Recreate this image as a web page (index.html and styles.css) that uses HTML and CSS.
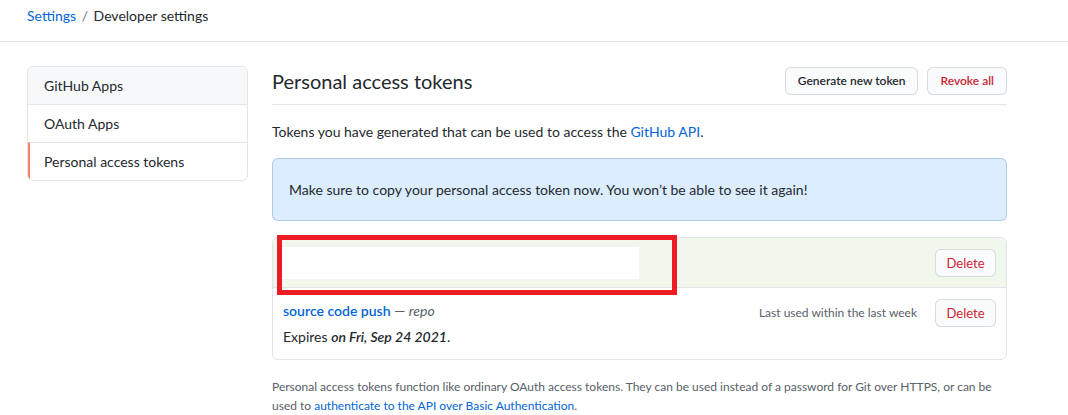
FILE: index.html
```html
<!DOCTYPE html>
<html lang="en">
<head>
<meta charset="utf-8">
<title>Developer settings</title>
<link rel="stylesheet" href="styles.css">
</head>
<body>
<header class="topbar">
  <nav class="crumbs"><a href="#" class="link">Settings</a> <span class="sep">/</span> Developer settings</nav>
</header>
<div class="layout">
  <aside class="menu">
    <a href="#" class="menu-item menu-item-first">GitHub Apps</a>
    <a href="#" class="menu-item">OAuth Apps</a>
    <a href="#" class="menu-item menu-item-selected">Personal access tokens</a>
  </aside>
  <main class="main">
    <div class="subhead">
      <h2 class="subhead-title">Personal access tokens</h2>
      <div class="subhead-actions">
        <button class="btn">Generate new token</button>
        <button class="btn btn-danger">Revoke all</button>
      </div>
    </div>
    <p class="lead">Tokens you have generated that can be used to access the <a href="#" class="link">GitHub API</a>.</p>
    <div class="flash">Make sure to copy your personal access token now. You won’t be able to see it again!</div>
    <div class="tokens">
      <div class="token token-new">
        <div class="token-field"></div>
        <button class="btn btn-danger btn-sm">Delete</button>
        <div class="redact"></div>
      </div>
      <div class="token token-row">
        <div class="token-info">
          <div><a href="#" class="token-name">source code push</a> <span class="muted">— <em>repo</em></span></div>
          <div class="expires">Expires <em class="date">on Fri, Sep 24 2021</em>.</div>
        </div>
        <div class="token-right">
          <span class="last-used">Last used within the last week</span>
          <button class="btn btn-danger btn-sm">Delete</button>
        </div>
      </div>
    </div>
    <p class="note">Personal access tokens function like ordinary OAuth access tokens. They can be used instead of a password for Git over HTTPS, or can be used to <a href="#" class="link">authenticate to the API over Basic Authentication</a>.</p>
  </main>
</div>
</body>
</html>
```
FILE: styles.css
```css
* { box-sizing: border-box; }
body {
  margin: 0;
  font-family: "Lato", "Liberation Sans", sans-serif;
  font-size: 14px;
  line-height: 21px;
  color: #24292e;
  background: #fff;
}
.link { color: #0366d6; text-decoration: none; }
.topbar {
  height: 42px;
  padding: 5px 27px 0;
  border-bottom: 1px solid #e1e4e8;
}
.crumbs { font-size: 14px; line-height: 21px; }
.sep { color: #6a737d; margin: 0 2px; }
.layout {
  display: flex;
  gap: 24px;
  padding: 24px 0 0 27px;
}
.menu {
  width: 221px;
  flex: none;
  align-self: flex-start;
  border: 1px solid #e1e4e8;
  border-radius: 6px;
  overflow: hidden;
  display: flex;
  flex-direction: column;
}
.menu-item {
  display: block;
  height: 38px;
  padding: 8px 16px;
  color: #24292e;
  text-decoration: none;
  border-top: 1px solid #e1e4e8;
}
.menu-item-first { border-top: 0; height: 37px; background: #f6f8fa; padding-top: 8px; }
.menu-item-selected { border-left: 2px solid #f9826c; padding-left: 14px; }
.main { width: 735px; flex: none; }
.subhead {
  display: flex;
  align-items: center;
  justify-content: space-between;
  padding-bottom: 8px;
  border-bottom: 1px solid #e1e4e8;
  height: 39px;
}
.subhead-title { margin: 0; font-size: 20px; font-weight: 400; line-height: 30px; }
.subhead-actions { display: flex; gap: 9px; }
.btn {
  font-family: inherit;
  font-size: 12px;
  font-weight: 600;
  line-height: 20px;
  height: 28px;
  padding: 3px 12px;
  color: #24292e;
  background: #fafbfc;
  border: 1px solid rgba(27,31,35,0.15);
  border-radius: 6px;
}
.btn-danger { color: #cb2431; }
.btn-sm { height: 28px; width: 61px; padding: 3px 0; font-size: 13px; font-weight: 400; }
.lead { margin: 16px 0 0; }
.flash {
  margin-top: 16px;
  padding: 20px 16px;
  background: #dbedff;
  border: 1px solid rgba(4,66,137,0.2);
  border-radius: 6px;
}
.tokens {
  margin-top: 16px;
  border: 1px solid #e1e4e8;
  border-radius: 6px;
}
.token {
  display: flex;
  justify-content: space-between;
  align-items: flex-start;
  padding: 10px;
}
.token-row { padding: 11px 10px 12px; }
.token-new {
  position: relative;
  height: 50px;
  align-items: center;
  background: #f0f7ec;
  border-bottom: 1px solid #e1e4e8;
  border-radius: 6px 6px 0 0;
  padding: 9px 10px 8px 7px;
}
.token-field { width: 359px; height: 32px; background: #fff; }
.redact {
  position: absolute;
  left: 4px;
  top: -3px;
  width: 400px;
  height: 60px;
  border: 5px solid #ed1c24;
}
.token-info { padding-top: 1px; }
.token-name { color: #0366d6; font-weight: 600; text-decoration: none; }
.muted { color: #586069; }
.expires { margin-top: 5px; }
.date { font-weight: 600; }
.token-right { display: flex; align-items: center; gap: 18px; }
.last-used { font-size: 12px; color: #586069; margin-top: -2px; }
.note {
  margin: 17px 0 0;
  font-size: 12px;
  line-height: 19px;
  color: #586069;
}
```
